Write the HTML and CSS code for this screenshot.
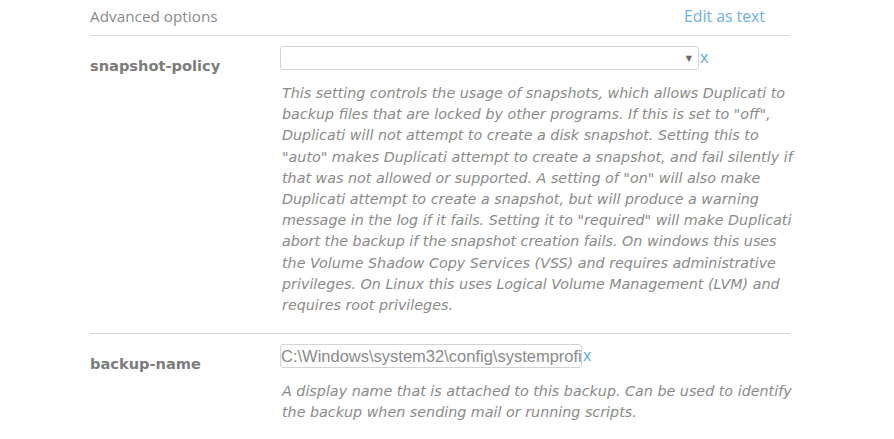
FILE: index.html
```html
<!DOCTYPE html>
<html>
<head>
<meta charset="utf-8">
<link rel="stylesheet" href="styles.css">
</head>
<body>
<div class="panel">
  <div class="header">
    <span class="title">Advanced options</span>
    <a class="edit-link">Edit as text</a>
  </div>
  <div class="option">
    <div class="label">snapshot-policy</div>
    <div class="field">
      <div class="control-row">
        <div class="select"><span class="caret">▼</span></div>
        <span class="remove">x</span>
      </div>
      <div class="desc">This setting controls the usage of snapshots, which allows Duplicati to backup files that are locked by other programs. If this is set to "off", Duplicati will not attempt to create a disk snapshot. Setting this to "auto" makes Duplicati attempt to create a snapshot, and fail silently if that was not allowed or supported. A setting of "on" will also make Duplicati attempt to create a snapshot, but will produce a warning message in the log if it fails. Setting it to "required" will make Duplicati abort the backup if the snapshot creation fails. On windows this uses the Volume Shadow Copy Services (VSS) and requires administrative privileges. On Linux this uses Logical Volume Management (LVM) and requires root privileges.</div>
    </div>
  </div>
  <div class="option">
    <div class="label">backup-name</div>
    <div class="field">
      <div class="control-row">
        <div class="text-input">C:\Windows\system32\config\systemprofi</div>
        <span class="remove">x</span>
      </div>
      <div class="desc">A display name that is attached to this backup. Can be used to identify the backup when sending mail or running scripts.</div>
    </div>
  </div>
</div>
</body>
</html>
```
FILE: styles.css
```css
html, body {
  margin: 0;
  padding: 0;
  background: #fff;
}
.panel {
  margin-left: 90px;
  width: 700px;
}
.header {
  display: flex;
  justify-content: space-between;
  align-items: baseline;
  padding: 6px 25px 8px 0;
  border-bottom: 1px solid #d8d8d8;
  font-family: "Open Sans", sans-serif;
  font-size: 15.3px;
  line-height: 21px;
}
.title {
  color: #8a8a8a;
}
.edit-link {
  color: #6cb0e4;
  font-size: 15.8px;
}
.option {
  display: flex;
  padding: 10px 0 17px;
  border-bottom: 1px solid #d8d8d8;
}
.option:last-child {
  border-bottom: none;
}
.label {
  width: 190px;
  flex: none;
  padding-top: 11px;
  font-family: "DejaVu Sans", Verdana, sans-serif;
  font-weight: bold;
  font-size: 14.6px;
  color: #7c7c7c;
}
.field {
  flex: 1;
}
.control-row {
  display: flex;
  align-items: center;
}
.select {
  width: 411px;
  height: 22px;
  border: 1px solid #d3d3d3;
  border-radius: 3px;
  display: flex;
  justify-content: flex-end;
  align-items: center;
  padding-right: 6px;
}
.caret {
  font-size: 8px;
  color: #666;
  font-family: "DejaVu Sans", sans-serif;
}
.text-input {
  width: 300px;
  height: 22px;
  border: 1px solid #d3d3d3;
  border-radius: 3px;
  overflow: hidden;
  white-space: nowrap;
  font-family: "Liberation Sans", Arial, sans-serif;
  font-size: 16.5px;
  line-height: 22px;
  color: #8a8a8a;
}
.remove {
  font-family: "Open Sans", sans-serif;
  font-size: 16px;
  color: #5aa8e0;
  margin-left: 1px;
  margin-top: -3px;
}
.desc {
  margin-top: 13px;
  width: 516px;
  padding-left: 2px;
  font-family: "DejaVu Sans", Verdana, sans-serif;
  font-style: italic;
  font-size: 14.3px;
  line-height: 21.2px;
  color: #8a8a8a;
}
```
